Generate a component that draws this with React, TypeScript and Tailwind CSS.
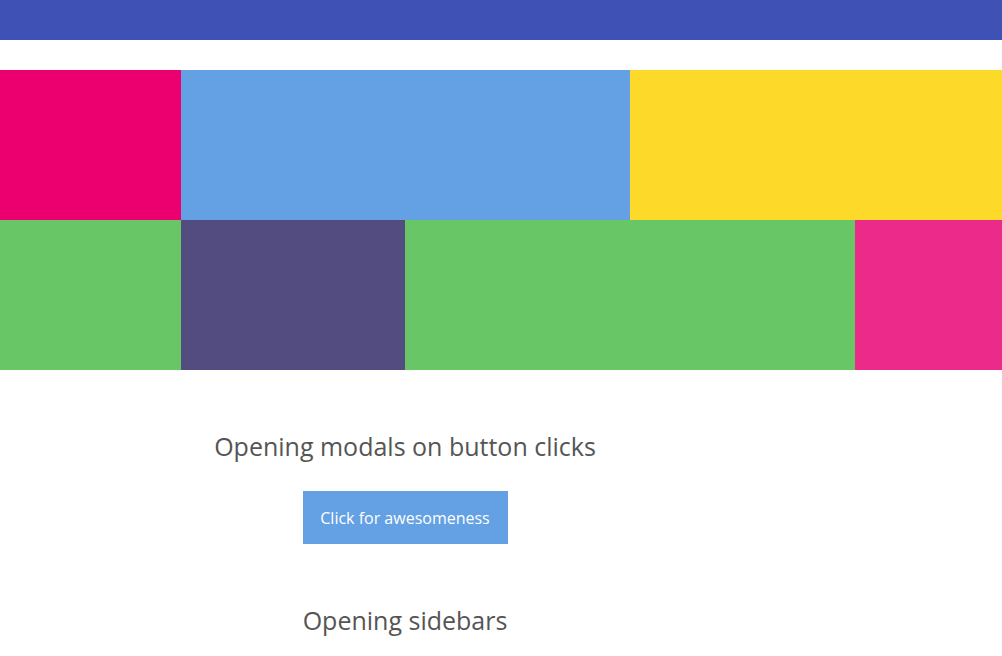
export default function App() {
  return (
    <div className="min-h-screen bg-white font-['Open_Sans',sans-serif]">
      <header className="h-10 bg-[#3f51b5]" />

      <section className="mt-[30px]">
        <div className="flex h-[150px]">
          <div className="w-[181px] bg-[#ec0070]" />
          <div className="w-[449px] bg-[#64a0e4]" />
          <div className="flex-1 bg-[#fdd92a]" />
        </div>
        <div className="flex h-[150px]">
          <div className="w-[181px] bg-[#68c667]" />
          <div className="w-[224px] bg-[#524c80]" />
          <div className="w-[450px] bg-[#68c667]" />
          <div className="flex-1 bg-[#ec2a8a]" />
        </div>
      </section>

      <main className="w-[810px] text-center pt-[60px]">
        <h2 className="text-[25px] leading-8 text-[#555]">
          Opening modals on button clicks
        </h2>
        <button className="mt-[29px] h-[53px] w-[205px] bg-[#64a0e4] text-[16px] text-white">
          Click for awesomeness
        </button>
        <h2 className="mt-[60px] text-[25px] leading-8 text-[#555]">
          Opening sidebars
        </h2>
      </main>
    </div>
  );
}
